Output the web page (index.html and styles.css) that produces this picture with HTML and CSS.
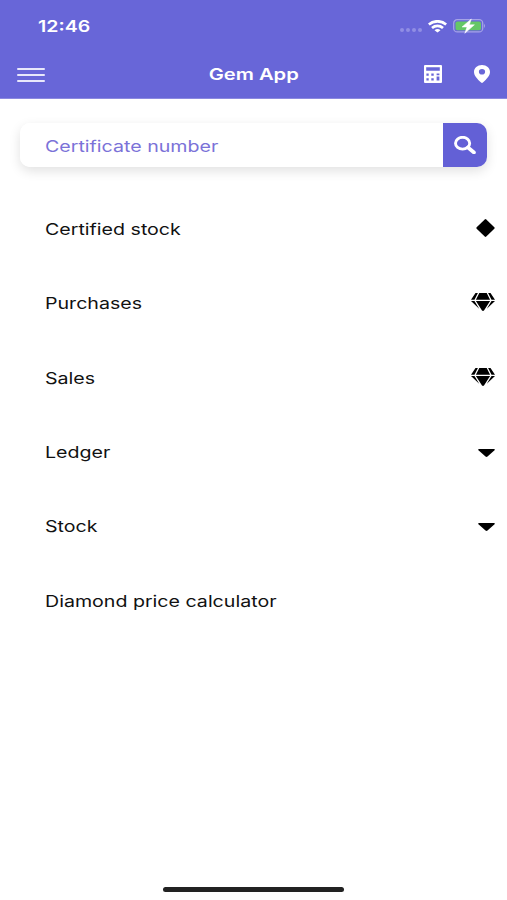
FILE: index.html
```html
<!DOCTYPE html>
<html lang="en">
<head>
  <meta charset="UTF-8" />
  <meta name="viewport" content="width=device-width, initial-scale=1" />
  <title>Gem App</title>
  <link rel="stylesheet" href="styles.css">
</head>
<body>
  <header class="header">
    <div class="status">
      <span class="time">12:46</span>
      <div class="status-icons">
        <div class="signal"><i></i><i></i><i></i><i></i></div>
        <svg class="wifi" viewBox="0 0 19 13" fill="none" stroke="#fff" stroke-width="2.700">
          <path d="M.8 4.500C5.800.2 13.200.2 18.200 4.500" />
          <path d="M4 8C7.200 5.200 11.800 5.200 15 8" />
          <path d="M6.500 10.200Q9.500 8 12.500 10.200L9.500 12.600Z" fill="#fff" stroke="none" />
        </svg>
        <svg class="battery" viewBox="0 0 33 16">
          <rect x=".7" y="1.700" width="29" height="12.200" rx="3.500" fill="none" stroke="#a5a4e6" stroke-width="1.300" />
          <rect x="2.500" y="3.400" width="25.500" height="8.800" rx="1.800" fill="#65c766" />
          <path d="M31 5.700Q33 7.800 31 9.900Z" fill="#a5a4e6" />
          <path d="M18.300 1L9 9h5l-2.200 6.300L21.400 6.800h-5Z" fill="#fff" stroke="#fff" stroke-width=".5" />
        </svg>
      </div>
    </div>
    <nav class="navbar">
      <div class="menu"><i></i><i></i><i></i></div>
      <h1 class="title">Gem App</h1>
      <div class="nav-icons">
        <svg class="calc" viewBox="0 0 18 18">
          <path fill="#fff" fill-rule="evenodd" d="M1 0h16q1 0 1 1v16q0 1-1 1H1q-1 0-1-1V1Q0 0 1 0ZM2.200 2.200v3.600h13.600V2.200ZM2.400 8.600v2.200h2.300V8.600ZM7.300 8.600v2.200h2.400V8.600ZM12.600 8.600v1.600h2.800V8.600ZM2.400 13.200v2.300h2.300v-2.300ZM7.300 13.200v2.300h2.400v-2.300ZM12.600 11.600v3.900h2.800v-3.900Z" />
        </svg>
        <svg class="pin" viewBox="0 0 16 18">
          <path fill="#fff" fill-rule="evenodd" d="M8 0C12.600 0 16 3 16 7c0 3.600-3.200 6.900-7.100 10.600q-.9.700-1.800 0C3.200 13.900 0 10.600 0 7 0 3 3.400 0 8 0ZM8 4a3.100 2.800 0 1 0 0 5.600A3.100 2.800 0 1 0 8 4Z" />
        </svg>
      </div>
    </nav>
  </header>

  <main>
    <div class="search">
      <div class="search-field"><span class="label">Certificate number</span></div>
      <button class="search-btn" aria-label="Search">
        <svg viewBox="0 0 22 18" fill="none" stroke="#fff">
          <ellipse cx="8.600" cy="7.200" rx="7.100" ry="5.900" stroke-width="2.900" />
          <path d="M14 11.500l6 5" stroke-width="3.600" stroke-linecap="round" />
        </svg>
      </button>
    </div>

    <ul class="list">
      <li>
        <span class="label">Certified stock</span>
        <svg class="diamond" viewBox="0 0 20 18" preserveAspectRatio="none"><path d="M9.200.4q.8-.6 1.600 0l8.500 7.900q.6.700 0 1.400l-8.500 7.900q-.8.600-1.600 0L.7 9.700q-.6-.7 0-1.400Z" /></svg>
      </li>
      <li>
        <span class="label">Purchases</span>
        <svg class="gem" viewBox="0 0 24 18">
          <path d="M4.500 0H6.900L3.500 6.700H0ZM8.300 0h7.400l3.400 6.700H4.900ZM17.100 0h2.400L24 6.700h-3.500ZM0 7.900h3.500l4.700 7.900ZM4.900 7.900h14.200L13 17.500q-1 .9-2 0ZM20.500 7.900H24l-8.200 7.900Z" />
        </svg>
      </li>
      <li>
        <span class="label">Sales</span>
        <svg class="gem" viewBox="0 0 24 18">
          <path d="M4.500 0H6.900L3.500 6.700H0ZM8.300 0h7.400l3.400 6.700H4.900ZM17.100 0h2.400L24 6.700h-3.500ZM0 7.900h3.500l4.700 7.900ZM4.900 7.900h14.200L13 17.500q-1 .9-2 0ZM20.500 7.900H24l-8.200 7.900Z" />
        </svg>
      </li>
      <li>
        <span class="label">Ledger</span>
        <svg class="caret" viewBox="0 0 17 8"><path d="M1 0h15q1.300.3.500 1.300L9.500 7.500q-1 .8-2 0L.5 1.300Q-.3.300 1 0Z" /></svg>
      </li>
      <li>
        <span class="label">Stock</span>
        <svg class="caret" viewBox="0 0 17 8"><path d="M1 0h15q1.300.3.500 1.300L9.500 7.500q-1 .8-2 0L.5 1.300Q-.3.300 1 0Z" /></svg>
      </li>
      <li><span class="label">Diamond price calculator</span></li>
    </ul>
  </main>

  <div class="home-bar"></div>
</body>
</html>
```
FILE: styles.css
```css
* {
  box-sizing: border-box;
}
body {
  margin: 0;
  height: 900px;
  display: flex;
  flex-direction: column;
  background: #fff;
  font-family: Inter, "Liberation Sans", sans-serif;
  color: #111;
  overflow: hidden;
}
svg {
  display: block;
}
.header {
  height: 99px;
  background: #6866d8;
  border-bottom: 1px solid #8b89e0;
  color: #fff;
}
.status {
  height: 52px;
  padding: 0 21px 0 38px;
  display: flex;
  align-items: center;
  justify-content: space-between;
}
.time {
  font-size: 16px;
  font-weight: 600;
  transform: scaleX(1.22);
  transform-origin: left;
}
.status-icons {
  display: flex;
  align-items: center;
}
.signal {
  display: flex;
  gap: 2px;
  margin: 8px 6px 0 0;
}
.signal i {
  width: 4px;
  height: 4px;
  border-radius: 2px;
  background: #908ee4;
}
.wifi {
  width: 19px;
  height: 13px;
  margin-right: 6px;
}
.battery {
  width: 33px;
  height: 16px;
}
.navbar {
  height: 44px;
  padding: 0 17px;
  display: grid;
  grid-template-columns: 1fr auto 1fr;
  align-items: center;
}
.menu {
  width: 28px;
  margin-top: 1px;
  display: flex;
  flex-direction: column;
  gap: 4px;
}
.menu i {
  height: 2px;
  border-radius: 1px;
  background: #e8e8fb;
}
.title {
  margin: 0;
  font-size: 16px;
  line-height: 20px;
  font-weight: 600;
  transform: scaleX(1.26);
}
.nav-icons {
  display: flex;
  justify-content: flex-end;
  gap: 32px;
}
.calc {
  width: 18px;
  height: 18px;
}
.pin {
  width: 16px;
  height: 18px;
}
.label {
  padding-top: 2px;
  font-size: 16px;
  line-height: 22px;
  white-space: nowrap;
  transform: scaleX(1.225);
  transform-origin: left;
}
.search {
  height: 44px;
  margin: 24px 20px 0;
  display: flex;
  border-radius: 10px;
  box-shadow: 0 4px 12px rgba(0, 0, 0, 0.12);
}
.search-field {
  flex: 1;
  padding-left: 25px;
  display: flex;
  align-items: center;
  background: #fff;
  border-radius: 10px 0 0 10px;
  color: #7b72d8;
}
.search-btn {
  width: 44px;
  padding: 0;
  display: flex;
  align-items: center;
  justify-content: center;
  border: none;
  border-radius: 0 10px 10px 0;
  background: #6360d6;
}
.search-btn svg {
  width: 22px;
  height: 18px;
}
.list {
  margin: 24px 0 0;
  padding: 0;
  list-style: none;
}
.list li {
  height: 74.3px;
  padding: 0 12px 0 45px;
  display: flex;
  align-items: center;
  justify-content: space-between;
}
.diamond {
  width: 19px;
  height: 18px;
}
.gem {
  width: 24px;
  height: 18px;
}
.caret {
  width: 17px;
  height: 8px;
  margin-top: 3px;
}
.home-bar {
  width: 181px;
  height: 5px;
  margin: auto auto 8px;
  border-radius: 3px;
  background: #222;
}
```
